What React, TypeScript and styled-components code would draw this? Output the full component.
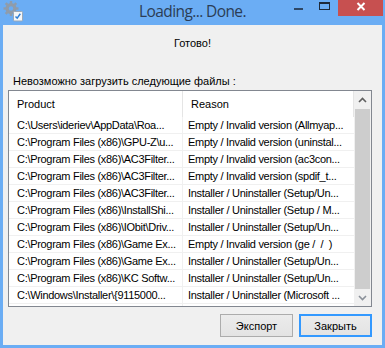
import React from "react";
import styled, { createGlobalStyle } from "styled-components";

const Global = createGlobalStyle`
  html, body { margin: 0; padding: 0; background: #6badf4; }
  body { width: 385px; height: 348px; overflow: hidden; }
`;

const Window = styled.div`
  width: 385px;
  height: 348px;
  box-sizing: border-box;
  background: #6badf4;
  display: flex;
  flex-direction: column;
  font-family: "Liberation Sans", Arial, sans-serif;
`;

const TitleBar = styled.div`
  height: 25px;
  flex: none;
  display: grid;
  grid-template-columns: 1fr auto 1fr;
  align-items: start;
`;

const TitleLeft = styled.div`
  padding: 1px 0 0 3px;
  display: flex;
`;

const TitleText = styled.div`
  font-family: "Open Sans", "Noto Sans", sans-serif;
  font-size: 15.5px;
  letter-spacing: -0.6px;
  color: #2b3d56;
  line-height: 22px;
  white-space: nowrap;
`;

const Controls = styled.div`
  display: flex;
  justify-content: flex-end;
  padding-right: 2px;
`;

const CaptionButton = styled.div<{ $w: number; $close?: boolean }>`
  width: ${(p) => p.$w}px;
  height: 16px;
  display: flex;
  justify-content: center;
  align-items: flex-start;
  padding-top: 2px;
  box-sizing: border-box;
  background: ${(p) => (p.$close ? "#c75050" : "transparent")};
`;

const Client = styled.div`
  flex: 1;
  margin: 0 3px 3px 3px;
  background: #f0f0f0;
  display: flex;
  flex-direction: column;
  font-size: 11px;
  color: #000;
`;

const Status = styled.div`
  margin-top: 12px;
  height: 13px;
  line-height: 13px;
  text-align: center;
`;

const Label = styled.div`
  margin-top: 25px;
  height: 13px;
  line-height: 13px;
  padding-left: 10px;
`;

const ListBox = styled.div`
  margin: 2px 0 0 5px;
  width: 364px;
  height: 217px;
  box-sizing: border-box;
  border: 1px solid #828790;
  background: #fff;
  display: flex;
  overflow: hidden;
`;

const TableArea = styled.div`
  flex: 1;
  display: flex;
  flex-direction: column;
  overflow: hidden;
`;

const HeaderRow = styled.div`
  height: 26px;
  flex: none;
  display: flex;
`;

const HeaderCell = styled.div<{ $w?: number }>`
  ${(p) => (p.$w ? `width: ${p.$w}px;` : "flex: 1;")}
  flex-shrink: 0;
  box-sizing: border-box;
  padding-left: 8px;
  line-height: 26px;
  border-right: 1px solid #e5e5e5;
`;

const Row = styled.div`
  height: 17px;
  flex: none;
  display: flex;
  box-sizing: border-box;
  border-bottom: 1px solid #f0f0f0;
`;

const Cell = styled.div<{ $w?: number; $pad: number }>`
  ${(p) => (p.$w ? `width: ${p.$w}px;` : "flex: 1;")}
  flex-shrink: 0;
  box-sizing: border-box;
  padding-left: ${(p) => p.$pad}px;
  line-height: 16px;
  letter-spacing: -0.3px;
  white-space: pre;
  overflow: hidden;
  border-right: ${(p) => (p.$w ? "1px solid #f0f0f0" : "none")};
`;

const ScrollBar = styled.div`
  width: 17px;
  flex: none;
  background: #f0f0f0;
  display: flex;
  flex-direction: column;
`;

const ArrowBox = styled.div`
  height: 17px;
  flex: none;
  display: flex;
  align-items: center;
  justify-content: center;
`;

const Track = styled.div`
  flex: 1;
  padding: 1px 1px 0 1px;
  display: flex;
  flex-direction: column;
`;

const Thumb = styled.div`
  flex: 1;
  background: #cdcdcd;
`;

const ButtonRow = styled.div`
  margin-top: 7px;
  height: 23px;
  display: flex;
  justify-content: flex-end;
  gap: 6px;
  padding-right: 10px;
`;

const Button = styled.div<{ $default?: boolean }>`
  width: 73px;
  height: 23px;
  box-sizing: border-box;
  display: flex;
  align-items: center;
  justify-content: center;
  border: 1px solid ${(p) => (p.$default ? "#3399ff" : "#acacac")};
  box-shadow: ${(p) => (p.$default ? "inset 0 0 0 1px #3399ff" : "none")};
  background: linear-gradient(#ececec, #e3e3e3);
  font-size: 11px;
`;

const rows: [string, string][] = [
  ["C:\\Users\\ideriev\\AppData\\Roa...", "Empty / Invalid version (Allmyap..."],
  ["C:\\Program Files (x86)\\GPU-Z\\u...", "Empty / Invalid version (uninstal..."],
  ["C:\\Program Files (x86)\\AC3Filter...", "Empty / Invalid version (ac3con..."],
  ["C:\\Program Files (x86)\\AC3Filter...", "Empty / Invalid version (spdif_t..."],
  ["C:\\Program Files (x86)\\AC3Filter...", "Installer / Uninstaller (Setup/Un..."],
  ["C:\\Program Files (x86)\\InstallShi...", "Installer / Uninstaller (Setup / M..."],
  ["C:\\Program Files (x86)\\IObit\\Driv...", "Installer / Uninstaller (Setup/Un..."],
  ["C:\\Program Files (x86)\\Game Ex...", "Empty / Invalid version (ge /  /  )"],
  ["C:\\Program Files (x86)\\Game Ex...", "Installer / Uninstaller (Setup/Un..."],
  ["C:\\Program Files (x86)\\KC Softw...", "Installer / Uninstaller (Setup/Un..."],
  ["C:\\Windows\\Installer\\{9115000...", "Installer / Uninstaller (Microsoft ..."],
  ["", ""],
];

const AppIcon = () => (
  <svg width="20" height="21" viewBox="0 0 20 21">
    <g fill="#8f9cab">
      <circle cx="8" cy="7.5" r="5.5" />
      {[0, 45, 90, 135, 180, 225, 270, 315].map((a) => (
        <rect key={a} x="6.8" y="0" width="2.4" height="3.5" transform={`rotate(${a} 8 7.5)`} />
      ))}
    </g>
    <circle cx="8" cy="7.5" r="2.2" fill="#6badf4" />
    <rect x="10.5" y="10.5" width="9" height="9.5" rx="1" fill="#f4f6f8" stroke="#9aa8b8" />
    <path d="M12.5 15.5 L14.2 17.2 L17.3 12.8" fill="none" stroke="#2f7fd6" strokeWidth="1.5" />
  </svg>
);

export default function App() {
  return (
    <>
      <Global />
      <Window>
        <TitleBar>
          <TitleLeft>
            <AppIcon />
          </TitleLeft>
          <TitleText>Loading... Done.</TitleText>
          <Controls>
            <CaptionButton $w={26}>
              <svg width="9" height="10" viewBox="0 0 9 10">
                <rect x="0" y="6" width="9" height="2" fill="#2e4766" />
              </svg>
            </CaptionButton>
            <CaptionButton $w={27}>
              <svg width="11" height="8" viewBox="0 0 11 8">
                <rect x="0.5" y="0.5" width="10" height="7" fill="none" stroke="#1e2a3a" />
                <rect x="0" y="0" width="11" height="2" fill="#1e2a3a" />
              </svg>
            </CaptionButton>
            <CaptionButton $w={45} $close>
              <svg width="10" height="9" viewBox="0 0 10 9">
                <path d="M1.5 1 L8.5 8 M8.5 1 L1.5 8" stroke="#fff" strokeWidth="2" />
              </svg>
            </CaptionButton>
          </Controls>
        </TitleBar>
        <Client>
          <Status>Готово!</Status>
          <Label>Невозможно загрузить следующие файлы :</Label>
          <ListBox>
            <TableArea>
              <HeaderRow>
                <HeaderCell $w={174}>Product</HeaderCell>
                <HeaderCell>Reason</HeaderCell>
              </HeaderRow>
              {rows.map(([a, b], i) => (
                <Row key={i}>
                  <Cell $w={174} $pad={8}>{a}</Cell>
                  <Cell $pad={5}>{b}</Cell>
                </Row>
              ))}
            </TableArea>
            <ScrollBar>
              <ArrowBox>
                <svg width="9" height="6" viewBox="0 0 9 6">
                  <path d="M1 5 L4.5 1.5 L8 5" fill="none" stroke="#606060" strokeWidth="1.6" />
                </svg>
              </ArrowBox>
              <Track>
                <Thumb />
              </Track>
              <ArrowBox>
                <svg width="9" height="6" viewBox="0 0 9 6">
                  <path d="M1 1 L4.5 4.5 L8 1" fill="none" stroke="#8a9099" strokeWidth="1.6" />
                </svg>
              </ArrowBox>
            </ScrollBar>
          </ListBox>
          <ButtonRow>
            <Button>Экспорт</Button>
            <Button $default>Закрыть</Button>
          </ButtonRow>
        </Client>
      </Window>
    </>
  );
}
